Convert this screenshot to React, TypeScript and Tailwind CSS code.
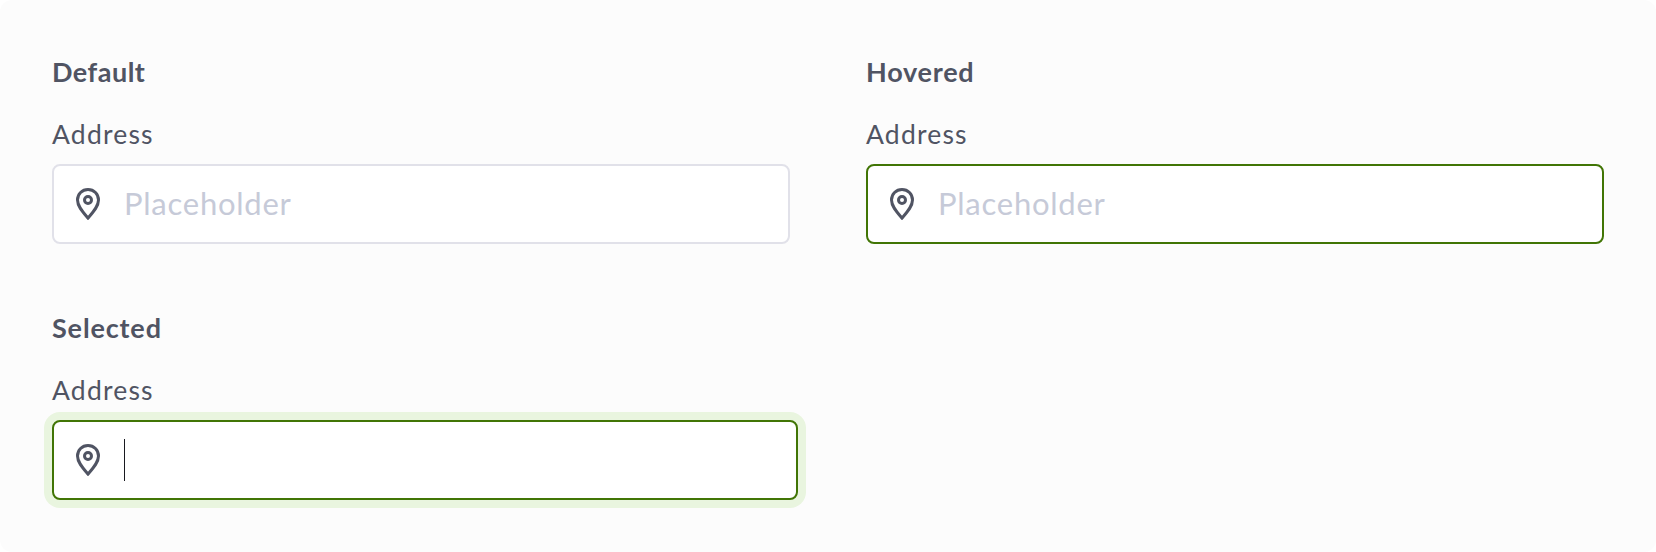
type FieldState = "default" | "hovered" | "selected";

const frames: Record<FieldState, string> = {
  default: "w-[738px] border-[#e1e1e9]",
  hovered: "w-[738px] border-[#417505]",
  selected: "w-[746px] border-[#417505] shadow-[0_0_0_8px_#e9f5df]",
};

const titleSpacing: Record<FieldState, string> = {
  default: "tracking-[0.5px]",
  hovered: "tracking-[0.75px]",
  selected: "tracking-[0.85px]",
};

function PinIcon() {
  return (
    <svg className="h-8 w-6 shrink-0" viewBox="0 0 24 32" fill="none" stroke="#505463" strokeWidth="3">
      <path d="M12 1.5C6.1 1.5 1.5 6.1 1.5 12c0 6.4 5.4 12.2 10.5 18.1C17.1 24.2 22.5 18.4 22.5 12 22.5 6.1 17.9 1.5 12 1.5Z" />
      <circle cx="12" cy="12" r="3.5" />
    </svg>
  );
}

function AddressField({ title, state }: { title: string; state: FieldState }) {
  return (
    <section className="flex h-64 flex-col items-start">
      <h2 className={`text-[27px] leading-9 font-bold ${titleSpacing[state]}`}>{title}</h2>
      <div className="mt-[26px] text-[26.5px] leading-9 tracking-[1.2px]">Address</div>
      <div className={`mt-3 flex h-20 items-center rounded-lg border-2 bg-white pl-[22px] ${frames[state]}`}>
        <PinIcon />
        {state === "selected" ? (
          <span className="ml-6 h-[42px] w-px bg-[#18191f]" />
        ) : (
          <span className="mb-0.5 ml-6 text-[31px] leading-10 tracking-[0.75px] text-[#c6cad8]">Placeholder</span>
        )}
      </div>
    </section>
  );
}

export default function App() {
  return (
    <div className="h-[552px] w-[1656px] bg-white">
      <main className="grid h-full grid-cols-[814px_1fr] content-start overflow-hidden rounded-xl bg-[#fcfcfc] pt-[54px] pl-[52px] font-['Lato',sans-serif] text-[#505463]">
        <AddressField title="Default" state="default" />
        <AddressField title="Hovered" state="hovered" />
        <AddressField title="Selected" state="selected" />
      </main>
    </div>
  );
}
